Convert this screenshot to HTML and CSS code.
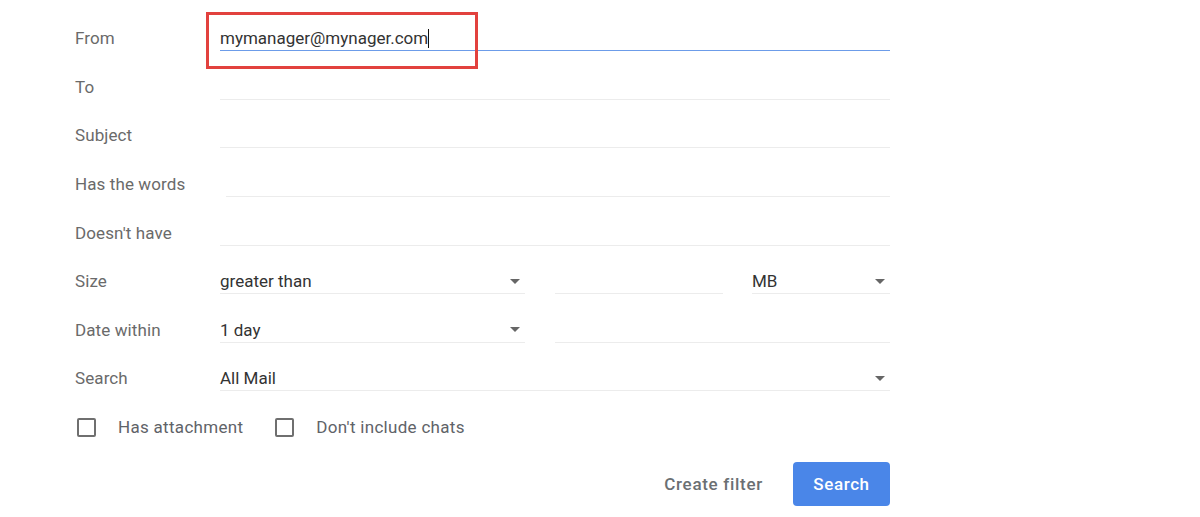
FILE: index.html
```html
<!DOCTYPE html>
<html>
<head>
<meta charset="utf-8">
<link rel="stylesheet" href="styles.css">
</head>
<body>
<div class="form">
  <div class="row">
    <div class="label">From</div>
    <div class="field active"><span class="value">mymanager@mynager.com</span><span class="caret"></span></div>
  </div>
  <div class="row">
    <div class="label">To</div>
    <div class="field"></div>
  </div>
  <div class="row">
    <div class="label">Subject</div>
    <div class="field"></div>
  </div>
  <div class="row">
    <div class="label">Has the words</div>
    <div class="field shifted"></div>
  </div>
  <div class="row">
    <div class="label">Doesn't have</div>
    <div class="field"></div>
  </div>
  <div class="row">
    <div class="label">Size</div>
    <div class="fields">
      <div class="field select w305"><span class="value">greater than</span><span class="arrow"></span></div>
      <div class="field w168"></div>
      <div class="field select w138"><span class="value">MB</span><span class="arrow"></span></div>
    </div>
  </div>
  <div class="row">
    <div class="label">Date within</div>
    <div class="fields">
      <div class="field select w305"><span class="value">1 day</span><span class="arrow"></span></div>
      <div class="field grow"></div>
    </div>
  </div>
  <div class="row">
    <div class="label">Search</div>
    <div class="field select"><span class="value">All Mail</span><span class="arrow"></span></div>
  </div>
  <div class="row checks">
    <label class="check"><span class="box"></span><span>Has attachment</span></label>
    <label class="check"><span class="box"></span><span>Don't include chats</span></label>
  </div>
  <div class="actions">
    <button class="link">Create filter</button>
    <button class="primary">Search</button>
  </div>
  <div class="highlight"></div>
</div>
</body>
</html>
```

FILE: styles.css
```css
html, body {
  margin: 0;
  padding: 0;
  background: #ffffff;
}
body {
  font-family: Roboto, "Liberation Sans", Arial, sans-serif;
  font-size: 17px;
  color: #5f6368;
}
.form {
  position: relative;
  width: 815px;
  padding: 14px 0 0 75px;
}
.row {
  display: flex;
  align-items: center;
  height: 48.6px;
}
.label {
  width: 145px;
  flex: none;
  color: #6a6a6a;
  letter-spacing: 0.1px;
}
.field {
  flex: 1;
  box-sizing: border-box;
  height: 25px;
  margin-top: 1px;
  border-bottom: 1px solid #ececec;
  display: flex;
  align-items: center;
  color: #333333;
  padding-bottom: 0;
}
.field.shifted {
  margin-left: 6px;
}
.field.active {
  border-bottom-color: #6c9ce9;
}
.value {
  color: #333333;
}
.caret {
  display: inline-block;
  width: 1px;
  height: 19px;
  background: #111;
  margin-left: 0;
}
.fields {
  flex: 1;
  display: flex;
  gap: 30px;
}
.fields .field.w305 { flex: none; width: 305px; }
.fields .field.w168 { flex: none; width: 168px; }
.fields .field.w138 { flex: none; width: 138px; margin-left: -1px; }
.fields .field.grow { flex: 1; }
.select {
  justify-content: space-between;
}
.arrow {
  width: 0;
  height: 0;
  border-left: 5px solid transparent;
  border-right: 5px solid transparent;
  border-top: 5px solid #666;
  margin-right: 5px;
  margin-top: 0;
}
.checks {
  gap: 32px;
  margin-left: 2px;
}
.check {
  display: flex;
  align-items: center;
  gap: 22px;
  color: #5f6368;
  letter-spacing: 0.3px;
}
.box {
  box-sizing: border-box;
  width: 19px;
  height: 19px;
  border: 2px solid #6f6f6f;
  border-radius: 2px;
}
.actions {
  display: flex;
  justify-content: flex-end;
  align-items: center;
  gap: 30px;
  margin-top: 11px;
}
button {
  font-family: Roboto, "Liberation Sans", Arial, sans-serif;
  font-size: 17px;
  font-weight: 500;
  border: none;
  cursor: pointer;
}
.link {
  background: transparent;
  color: #6b6f73;
  padding: 0;
  letter-spacing: 0.7px;
}
.primary {
  background: #4a86e8;
  color: #ffffff;
  width: 97px;
  height: 44px;
  border-radius: 4px;
  letter-spacing: 0.6px;
}
.highlight {
  position: absolute;
  left: 206px;
  top: 12px;
  width: 272px;
  height: 57px;
  box-sizing: border-box;
  border: 3px solid #e2413e;
  pointer-events: none;
}
```
